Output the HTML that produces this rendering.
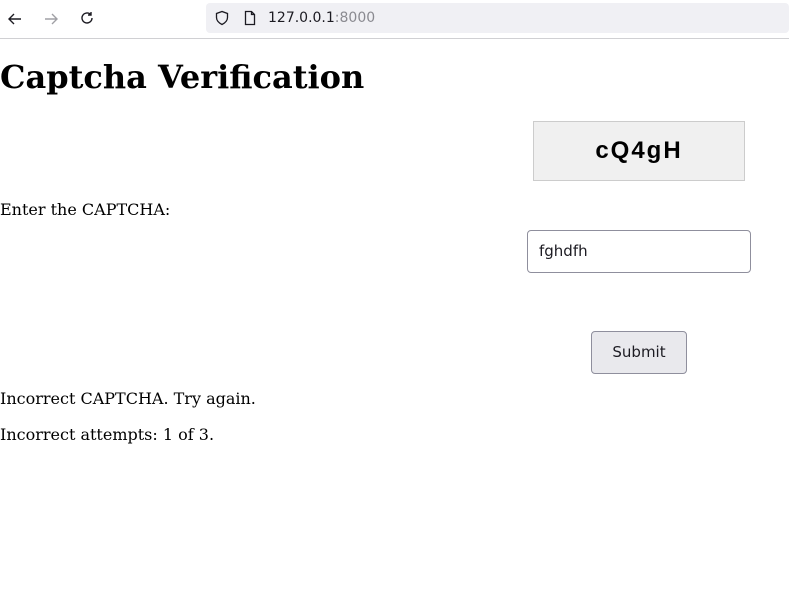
<!DOCTYPE html>
<html><head><meta charset="utf-8"><style>
*{box-sizing:border-box}
body{margin:0;width:789px;height:611px;background:#fff;font-family:"DejaVu Serif",serif;position:relative;overflow:hidden}
.bar{position:absolute;left:0;top:0;width:789px;height:39px;background:#fff;border-bottom:1px solid #d0d0d3}
.url{position:absolute;left:206px;top:3px;width:583px;height:30px;background:#f0f0f4;border-radius:4px}
.urltext{position:absolute;left:268px;top:10px;font:14px "DejaVu Sans",sans-serif;color:#1c1b22}
.urltext span{color:#8a8a90}
svg{position:absolute}
h1{position:absolute;left:0;top:58px;margin:0;font-size:32px;font-weight:bold;font-family:"DejaVu Serif",serif}
.cap{position:absolute;left:533px;top:121px;width:212px;height:60px;background:#f0f0f0;border:1px solid #ccc;text-align:center;font:bold 24px "Liberation Sans",sans-serif;line-height:58px;letter-spacing:2px}
.inp{position:absolute;left:527px;top:230px;width:224px;height:43px;border:1px solid #8f8f9d;border-radius:4px;padding-left:11px;font:15px "DejaVu Sans",sans-serif;line-height:41px;color:#1c1b22}
.btn{position:absolute;left:591px;top:331px;width:96px;height:43px;border:1px solid #8f8f9d;border-radius:4px;background:#e9e9ed;text-align:center;font:15px "DejaVu Sans",sans-serif;line-height:41px;color:#1c1b22}
.t{position:absolute;left:0;font-size:16px;color:#000;line-height:20px}
</style></head><body>
<div class="bar">
<svg style="left:7px;top:11px" width="16" height="16" viewBox="0 0 16 16"><path d="M14 8H2M7 3L2 8l5 5" fill="none" stroke="#1c1b22" stroke-width="1.4"/></svg>
<svg style="left:43px;top:11px" width="16" height="16" viewBox="0 0 16 16"><path d="M2 8h12M9 3l5 5-5 5" fill="none" stroke="#a0a0a5" stroke-width="1.4"/></svg>
<svg style="left:79px;top:10px" width="16" height="16" viewBox="0 0 16 16"><path d="M13 8a5 5 0 1 1-1.5-3.6M12 2v3H9" fill="none" stroke="#1c1b22" stroke-width="1.4"/></svg>
<div class="url"></div>
<svg style="left:214px;top:10px" width="16" height="16" viewBox="0 0 16 16"><path d="M8 1.5L2.5 3.5v4c0 3.5 2.5 5.5 5.5 7 3-1.5 5.5-3.5 5.5-7v-4z" fill="none" stroke="#1c1b22" stroke-width="1.3"/></svg>
<svg style="left:242px;top:10px" width="16" height="16" viewBox="0 0 16 16"><path d="M3.5 1.5h6l3 3v10h-9z M9.5 1.5v3h3" fill="none" stroke="#1c1b22" stroke-width="1.3"/></svg>
<div class="urltext">127.0.0.1<span>:8000</span></div>
</div>
<h1>Captcha Verification</h1>
<div class="cap">cQ4gH</div>
<div class="t" style="top:200px">Enter the CAPTCHA:</div>
<div class="inp">fghdfh</div>
<div class="btn">Submit</div>
<div class="t" style="top:389px">Incorrect CAPTCHA. Try again.</div>
<div class="t" style="top:425px">Incorrect attempts: 1 of 3.</div>
</body></html>
